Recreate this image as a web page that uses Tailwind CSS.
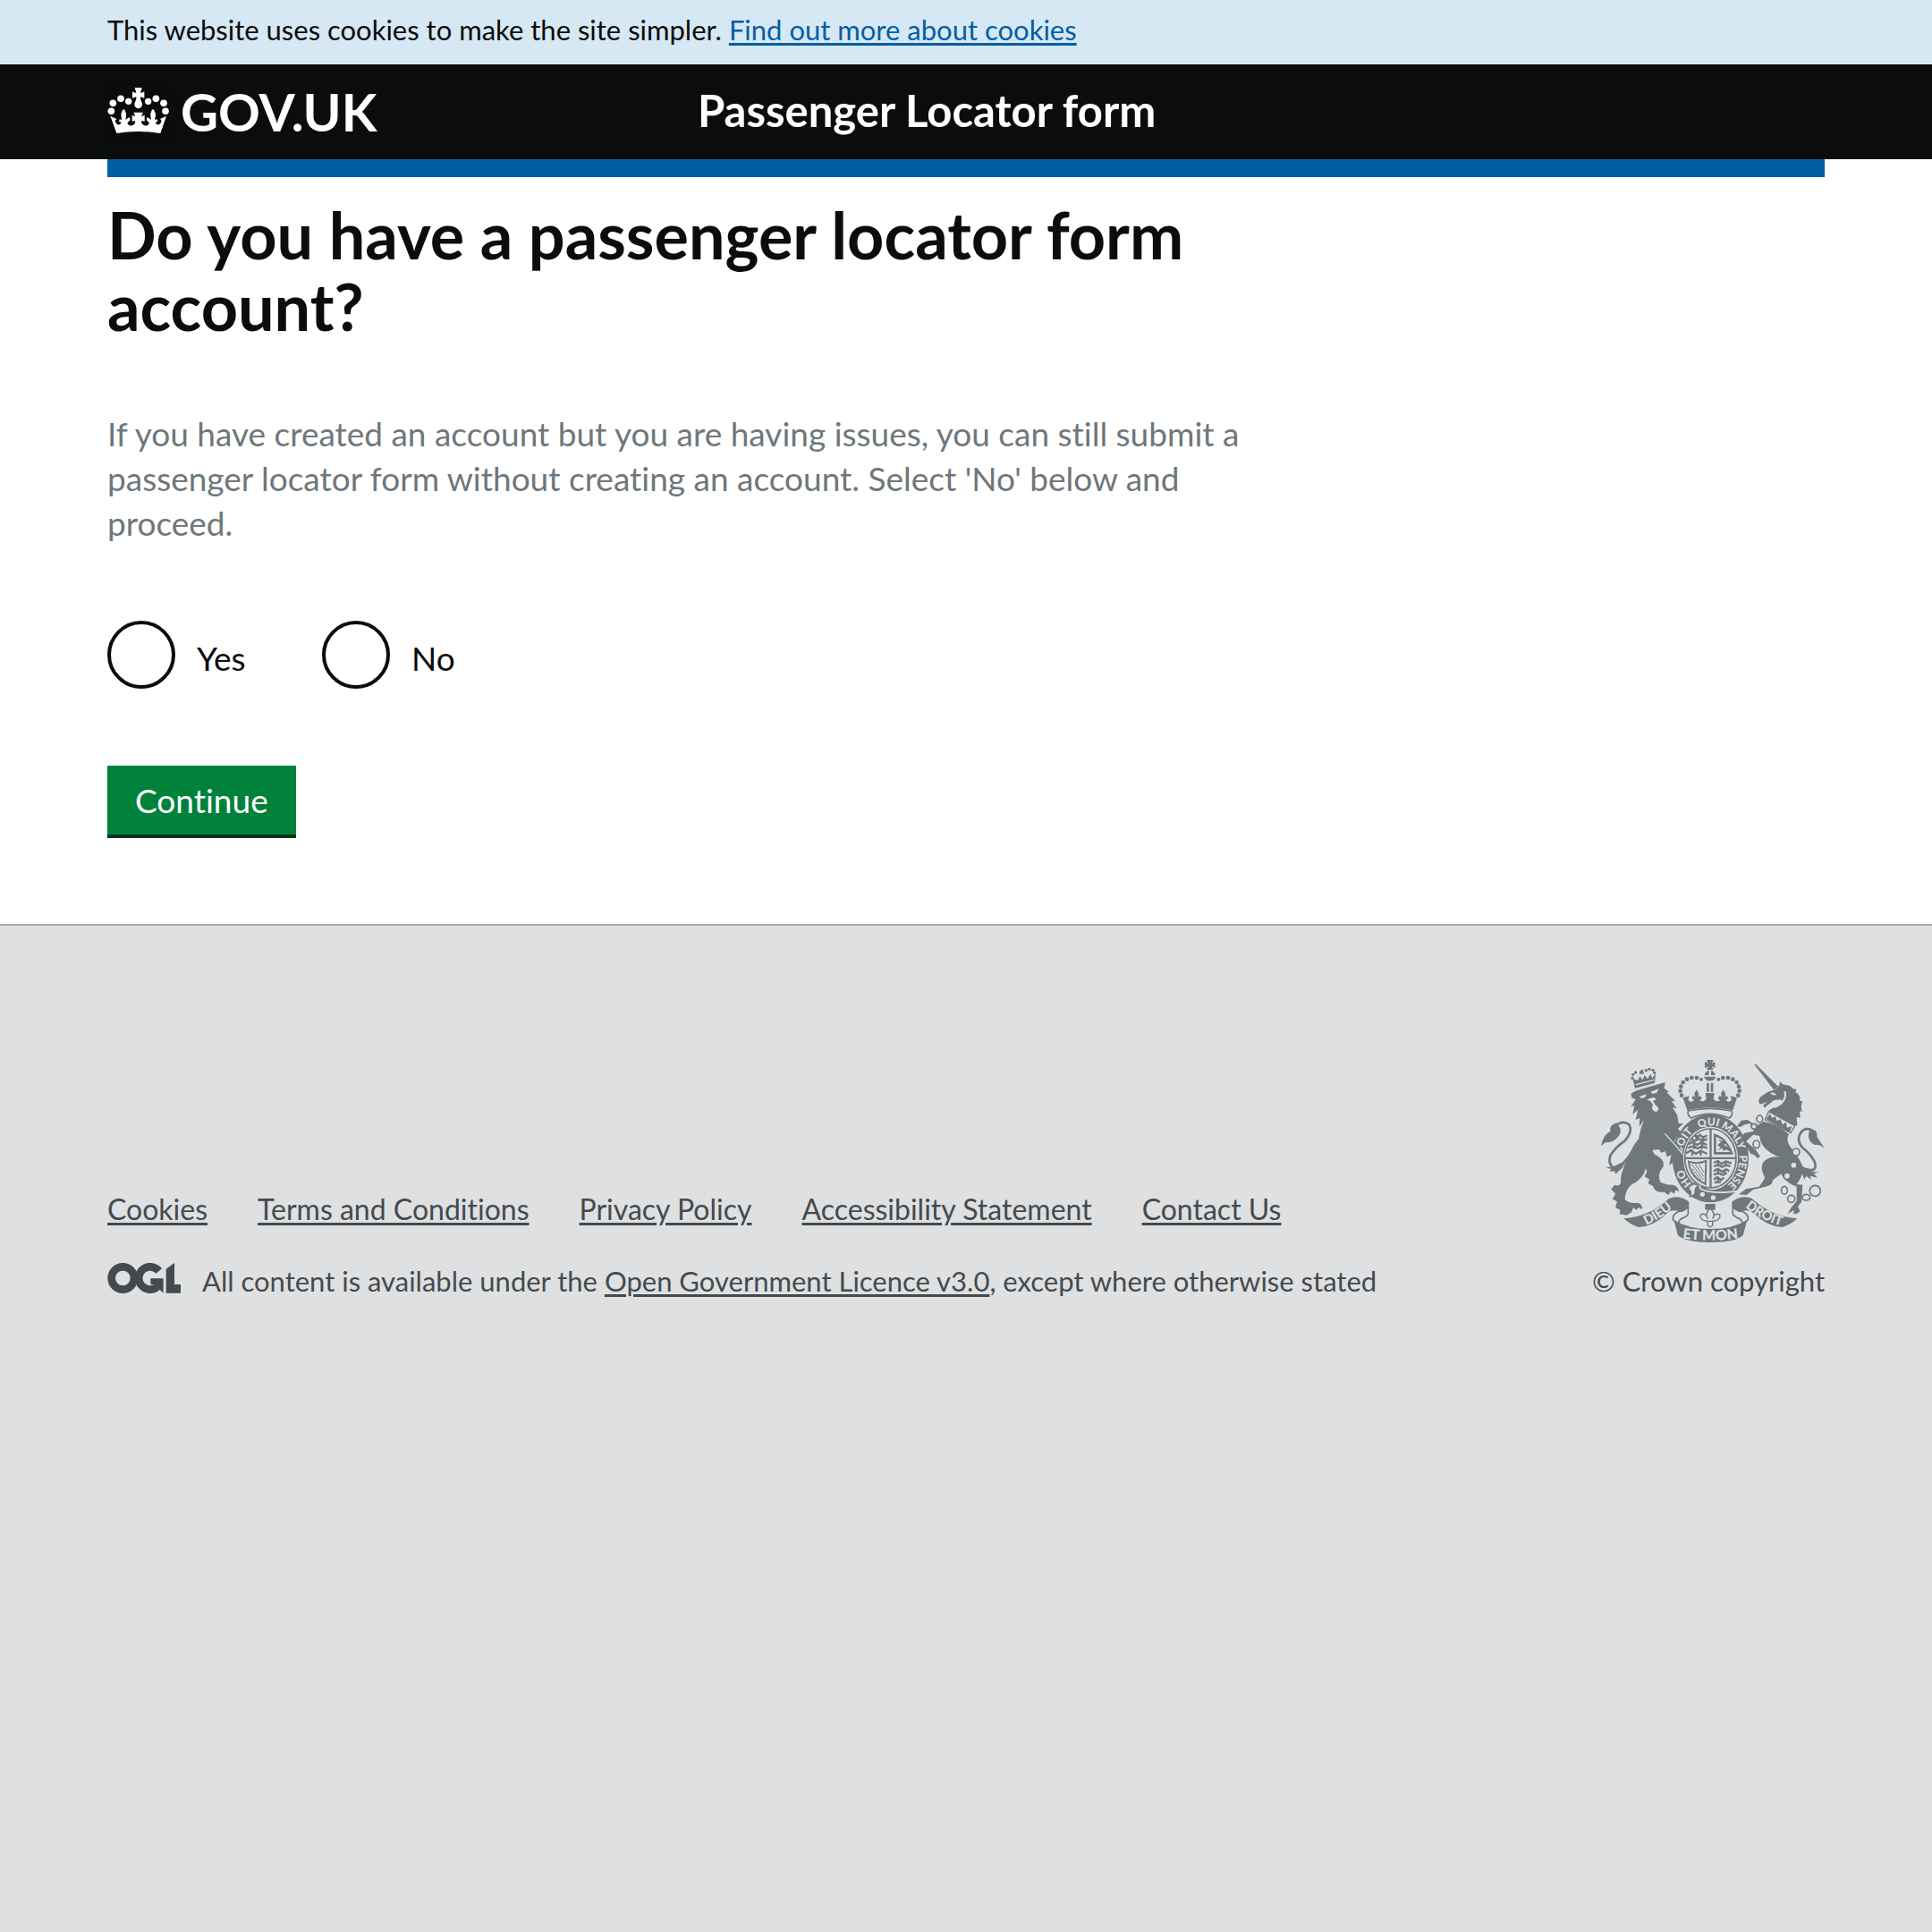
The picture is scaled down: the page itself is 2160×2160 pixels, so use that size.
<!DOCTYPE html>
<html lang="en">
<head>
<meta charset="utf-8">
<meta name="viewport" content="width=device-width, initial-scale=1">
<title>Do you have a passenger locator form account? - GOV.UK</title>
<script src="https://cdn.jsdelivr.net/npm/@tailwindcss/browser@4"></script>
</head>
<body class="flex min-h-screen flex-col bg-white font-['Lato',sans-serif] text-[#0b0c0c] [font-variant-ligatures:none]">

<div class="bg-[#d5e8f3] px-[120px] pt-[13px] pb-[19px]">
  <p class="text-[31px] leading-10">This website uses cookies to make the site simpler. <a href="#cookies" class="text-[#005ea5] underline decoration-3 underline-offset-3">Find out more about cookies</a></p>
</div>

<header class="bg-[#0b0c0c] px-[120px] text-white">
  <div class="grid grid-cols-3 items-start gap-x-[60px] py-5">
    <a href="#home" class="flex items-start gap-3 pt-1">
      <svg class="h-[62px] w-[70px] shrink-0 bg-[#0b0b0b]" viewBox="61 48 210 186" fill="#fff" aria-hidden="true">
        <circle cx="74" cy="133" r="11.500"/><circle cx="80" cy="106" r="11.500"/><circle cx="106" cy="91" r="11.500"/><circle cx="132" cy="100" r="11"/>
        <circle cx="256" cy="133" r="11.500"/><circle cx="250" cy="106" r="11.500"/><circle cx="224" cy="91" r="11.500"/><circle cx="198" cy="100" r="11"/>
        <path d="M153 54H177L172 71Q179 72 185 67V90Q178 84 171 86Q173 97 178 107Q179 121 165 124Q151 121 152 107Q157 97 159 86Q152 84 145 90V67Q151 72 158 71Z"/>
        <path d="M71 149L92 159Q84 165 91 174Q98 182 106 175Q110 168 100 168L102 160L110 162Q102 138 116 125Q129 138 122 162L134 153Q142 163 132 168Q126 172 131 178Q139 185 150 178Q158 171 152 164L144 168V146L155 151L149 137H181L175 151L186 146V168L178 164Q172 171 180 178Q191 185 199 178Q204 172 198 168Q188 163 196 153L208 162Q201 138 214 125Q228 138 220 162L228 160L230 168Q220 168 224 175Q232 182 239 174Q246 165 238 159L259 149L239 207Q165 195 92 207Z"/>
      </svg>
      <span class="text-[58px] leading-[58px] font-bold">GOV.UK</span>
    </a>
    <a href="#service" class="col-span-2 text-[49px] leading-[62px] font-bold">Passenger Locator form</a>
  </div>
</header>

<main class="px-[120px] pb-24">
  <div class="h-5 bg-[#005ea5]"></div>
  <form class="w-2/3 pt-6">
    <fieldset aria-describedby="hint">
      <legend><h1 class="text-[72px] leading-20 font-bold">Do you have a passenger locator form account?</h1></legend>
      <p id="hint" class="mt-[78px] text-[37px] leading-[50px] text-[#6f777b]">If you have created an account but you are having issues, you can still submit a passenger locator form without creating an account. Select 'No' below and proceed.</p>
      <div class="mt-[84px] flex">
        <div class="flex w-60 items-center gap-6">
          <input type="radio" id="yes" name="account" value="yes" class="size-19 appearance-none rounded-full border-4 border-[#0b0c0c] bg-white">
          <label for="yes" class="pt-2 text-[37px] leading-[50px]">Yes</label>
        </div>
        <div class="flex w-60 items-center gap-6">
          <input type="radio" id="no" name="account" value="no" class="size-19 appearance-none rounded-full border-4 border-[#0b0c0c] bg-white">
          <label for="no" class="pt-2 text-[37px] leading-[50px]">No</label>
        </div>
      </div>
    </fieldset>
    <button type="submit" class="mt-[86px] block border-b-4 border-[#003618] bg-[#00823b] px-[31px] pt-[14px] pb-[13px] text-[37px] leading-[50px] text-white">Continue</button>
  </form>
</main>

<footer class="grow border-t-2 border-[#a1acb2] bg-[#dee0e2] px-[120px] pt-[150px] text-[31px] leading-10 text-[#454a4d]">
  <div class="flex items-end justify-between">
    <div>
      <ul class="flex gap-14 text-[32px]">
        <li><a href="#cookies" class="underline decoration-3 underline-offset-3">Cookies</a></li>
        <li><a href="#terms" class="underline decoration-3 underline-offset-3">Terms and Conditions</a></li>
        <li><a href="#privacy" class="underline decoration-3 underline-offset-3">Privacy Policy</a></li>
        <li><a href="#accessibility" class="underline decoration-3 underline-offset-3">Accessibility Statement</a></li>
        <li><a href="#contact" class="underline decoration-3 underline-offset-3">Contact Us</a></li>
      </ul>
      <div class="mt-10 flex items-start gap-6">
        <svg class="h-[34px] w-[82px] shrink-0" viewBox="60 276 246 102" fill="none" stroke="#454a4d" stroke-width="26" role="img" aria-label="Open Government Licence">
          <circle cx="112" cy="327" r="38"/>
          <path d="M233 303A38 38 0 1 0 228 356"/>
          <path d="M205 328H248V377L234 364L218 348H205Z" fill="#454a4d" stroke="none"/>
          <path d="M257 296L285 276V348H306V377H257Z" fill="#454a4d" stroke="none"/>
        </svg>
        <p>All content is available under the <a href="#ogl" class="underline decoration-3 underline-offset-3">Open Government Licence v3.0</a>, except where otherwise stated</p>
      </div>
    </div>
    <a href="#copyright" class="flex flex-col items-end gap-[23px]">
      <svg class="h-[204px] w-[250px]" viewBox="60 45 750 612" fill="#6f777b" aria-hidden="true">
        <defs>
          <path id="garter" d="M427 485A97 110 0 0 1 427 265A97 110 0 0 1 427 485"/>
          <path id="ribbonLeft" d="M196 604Q250 587 312 533"/>
          <path id="ribbonRight" d="M536 531Q590 582 674 604"/>
          <path id="ribbonMid" d="M326 642Q427 658 528 642"/>
        </defs>

        <!-- imperial crown -->
        <path d="M414 45H437L431 57L442 51V73L431 66L437 78H414L420 66L408 73V51L420 57Z"/>
        <path d="M407 96Q410 82 422 80V96ZM429 80Q440 82 443 96H429ZM405 101H445Q440 115 425 115Q410 115 405 101Z"/>
        <path d="M414 122H422V152H414ZM428 122H436V152H428Z"/>
        <g>
          <circle cx="396" cy="110" r="6"/><circle cx="381" cy="105" r="7"/><circle cx="364" cy="105" r="7"/><circle cx="348" cy="110" r="7"/><circle cx="335" cy="120" r="7"/><circle cx="328" cy="134" r="7"/><circle cx="326" cy="149" r="7"/><circle cx="330" cy="164" r="7"/>
          <circle cx="454" cy="110" r="6"/><circle cx="469" cy="105" r="7"/><circle cx="486" cy="105" r="7"/><circle cx="502" cy="110" r="7"/><circle cx="515" cy="120" r="7"/><circle cx="522" cy="134" r="7"/><circle cx="524" cy="149" r="7"/><circle cx="520" cy="164" r="7"/>
        </g>
        <path d="M334 172L356 166L352 180L362 186L372 180L364 174L370 164L376 170L373 158L380 145L388 158L385 170L392 164L398 174L390 182L404 184L413 176L410 156H440L437 176L446 184L460 182L452 174L458 164L465 170L462 158L470 145L478 158L475 170L481 164L487 174L478 180L488 186L498 180L494 166L516 172L502 214Q425 196 349 214Z"/>
        <path d="M352 216Q425 200 498 216Q504 228 490 240Q425 212 362 240Q348 230 352 216Z" fill="#dee0e2" stroke="#6f777b" stroke-width="5"/>

        <!-- garter and shield -->
        <ellipse cx="427" cy="375" rx="128" ry="148"/>
        <ellipse cx="427" cy="375" rx="92" ry="106" fill="#dee0e2"/>
        <ellipse cx="427" cy="375" rx="86" ry="99" fill="none" stroke="#6f777b" stroke-width="5"/>
        <path d="M424 276H431V475H424ZM341 371H513V378H341Z"/>
        <path d="M438 292Q480 300 504 362H438ZM446 302V354H492Q480 316 446 302Z" fill-rule="evenodd"/>
        <path d="M452 350L460 338L450 330L462 322L452 312L468 318L474 310L480 322L472 330L486 338L494 352L480 346L470 350L466 340Z"/>
        <g fill="none" stroke="#6f777b" stroke-width="7" stroke-linejoin="round">
          <path d="M372 298L384 304L392 296L402 306L416 298M362 310L374 316L388 309L400 317L416 310M354 328L368 320L382 330L396 322L416 330M352 340L370 334L384 342L400 334L416 341M346 358L362 348L378 360L394 350L416 360M380 296V318M402 300V318M372 324V344M398 324V344M366 350V366M394 350V366"/>
          <path d="M438 390L452 384L464 394L478 385L498 392M438 402L452 397L466 404L480 397L494 402M438 418L452 410L466 420L480 412L490 418M438 430L454 424L468 431L482 424M438 446L450 438L462 448L472 440M440 456L462 454M452 384V402M478 386V402M452 412V430M474 412V428M452 440V456"/>
        </g>
        <path d="M354 386Q384 396 412 384L410 462Q394 452 384 446Q356 420 354 386Z" fill="none" stroke="#6f777b" stroke-width="6"/>
        <path d="M364 394L402 446M376 396L404 436M388 396L406 424M366 410L396 450" stroke="#6f777b" stroke-width="3"/>
        <path d="M346 470Q372 444 404 472Q440 492 510 474L480 505Q440 530 395 518Z"/>
        <path d="M352 478Q362 455 382 464Q396 468 392 476Q430 498 528 484" fill="none" stroke="#dee0e2" stroke-width="5"/>
        <path d="M352 476Q366 452 386 466Q374 476 376 490Q372 504 358 502Q366 488 352 476Z" fill="#dee0e2" stroke="#6f777b" stroke-width="5"/>
        <circle cx="400" cy="496" r="8" fill="#dee0e2"/><circle cx="436" cy="507" r="8" fill="#dee0e2"/>
        <g fill="#dee0e2" font-family="Lato, sans-serif" font-size="36" font-weight="900" text-anchor="middle">
          <text><textPath href="#garter" startOffset="15%">HO</textPath></text>
          <text><textPath href="#garter" startOffset="34%">SOIT</textPath></text>
          <text><textPath href="#garter" startOffset="49%">QUI</textPath></text>
          <text><textPath href="#garter" startOffset="63%">MALY</textPath></text>
          <text><textPath href="#garter" startOffset="82%">PENSE</textPath></text>
        </g>

        <!-- lion -->
        <path d="M166 108L174 140L240 122L243 90L232 106L226 92L216 108L206 96L200 112L190 100L184 114Z"/>
        <path d="M176 128L238 112" stroke="#dee0e2" stroke-width="4"/>
        <path d="M186 88L200 76L204 94ZM190 80H202V92H190Z"/>
        <g><circle cx="165" cy="106" r="5"/><circle cx="167" cy="94" r="5"/><circle cx="176" cy="87" r="5"/><circle cx="211" cy="80" r="5"/><circle cx="222" cy="76" r="5"/><circle cx="234" cy="79" r="5"/><circle cx="239" cy="88" r="5"/></g>
        <path d="M160 158L178 148L262 124L275 120L272 140L288 152L280 154L294 168L310 184L296 182L314 208L300 204L316 232L320 258L336 258L318 276L326 286L306 318L324 338L335 368L338 398L326 394L316 405L302 398L304 388L288 398L292 380L296 364L280 370L276 352L262 356L254 345L232 348L240 362Q276 378 268 404Q246 430 260 456L286 464Q316 460 322 486L310 482L305 494L294 486L286 498L272 488Q240 492 234 468L218 460L222 446L206 436L214 420L208 404L213 384Q212 440 164 462Q140 480 140 514Q154 528 184 524Q200 530 198 546L186 540L178 548L168 540L162 556L146 566L122 562L124 548L108 540L114 520L98 512L108 494L94 478L106 464Q130 474 126 442Q132 406 152 370Q164 336 186 310Q192 276 204 246L188 270L190 240L176 246L184 212L166 228L172 198L160 202L176 178L163 172Z"/>
        <path d="M188 168L212 160L208 170L196 174ZM226 152L254 142L246 156L232 158ZM214 178L236 170L246 178L234 182L242 196Q256 204 252 214Q244 224 234 214Q228 206 234 196L226 184Z" fill="#dee0e2"/>
        <path d="M274 292L312 334L334 362" fill="none" stroke="#dee0e2" stroke-width="4"/>
        <path d="M166 350Q126 412 100 406Q82 390 92 364Q108 338 140 316Q168 284 154 262Q140 250 120 258" fill="none" stroke="#6f777b" stroke-width="8"/>
        <path d="M130 256Q96 252 90 276L92 284Q66 296 60 334Q76 318 84 322Q110 318 124 292Q128 274 118 264Z"/>
        <path d="M146 382L130 408L108 428L106 418L88 420L94 412L74 404L98 404Z"/>

        <!-- unicorn -->
        <path d="M574 60L580 60L654 134L640 146Z"/>
        <path d="M588 180L596 168L620 152L646 144L658 130L660 118L672 128Q696 128 704 142L716 144L712 152Q732 166 726 182L736 184Q728 198 734 220L726 216L728 240L716 236L718 264L706 266L622 216Q634 204 660 198Q672 190 664 178L640 180L622 194L608 206L604 196L618 186L592 194Z"/>
        <path d="M676 150Q686 184 642 204" fill="none" stroke="#dee0e2" stroke-width="6"/>
        <path d="M628 158Q638 150 648 162Q638 166 628 158Z" fill="#dee0e2"/>
        <path d="M622 218L610 246L696 290L710 266Z" fill="#dee0e2" stroke="#6f777b" stroke-width="4"/>
        <path d="M614 244L626 226L634 240L644 234L650 250L662 244L668 262L680 254L684 272L700 268L692 288Z"/>
        <path d="M606 252Q650 262 690 294Q678 316 696 338Q724 370 736 402Q740 430 716 462L736 464L732 522L720 538L728 552L716 562L704 560L708 548L686 562L698 540L716 518V470Q676 458 660 420Q630 406 634 448Q640 464 612 470L570 480L548 498L522 496L546 478L590 470L606 448L610 440Q584 394 620 376Q640 366 660 372Q594 346 592 300L570 296L556 310L546 318L580 348L594 370L584 374L574 364L562 360L528 304L542 290L584 282L572 284L560 258L542 262L528 270L516 268L530 248L552 246L580 266Z"/>
        <path d="M610 436L640 380L664 372L668 424L634 450L618 468L604 456Z"/>
        <g fill="none" stroke="#6f777b" stroke-width="5">
          <circle cx="778" cy="484" r="18"/><ellipse cx="748" cy="506" rx="13" ry="10"/><circle cx="698" cy="511" r="12"/><ellipse cx="675" cy="482" rx="10" ry="13"/>
          <ellipse cx="592" cy="243" rx="10" ry="12"/>
          <g fill="#dee0e2"><circle cx="714" cy="354" r="12"/><ellipse cx="581" cy="328" rx="11" ry="13"/><circle cx="573" cy="268" r="9"/><circle cx="706" cy="398" r="11"/><circle cx="684" cy="434" r="11"/></g>
        </g>
        <path d="M732 406Q790 430 776 386Q760 356 736 340Q712 312 732 286Q744 270 766 280" fill="none" stroke="#6f777b" stroke-width="8"/>
        <path d="M760 276Q788 278 784 302L810 342Q792 326 776 330Q754 318 756 296Z"/>
        <path d="M720 394L742 446L748 434L764 446L762 434L786 440L774 426L792 420Q756 424 736 402Z"/>

        <!-- motto ribbon -->
        <path d="M136 577Q220 572 288 510Q320 496 354 520Q360 546 330 556Q300 542 280 560Q240 602 186 606Q158 598 136 577Z"/>
        <path d="M718 577Q634 572 566 510Q534 496 500 520Q494 546 524 556Q554 542 574 560Q614 602 668 606Q696 598 718 577Z"/>
        <path d="M332 549Q296 560 302 582L318 596M352 524V552Q356 566 338 574Q318 580 320 596M522 549Q558 560 552 582L536 596M502 524V552Q498 566 516 574Q536 580 534 596" fill="none" stroke="#6f777b" stroke-width="5"/>
        <path d="M304 582Q352 612 427 612Q502 612 550 582L536 634Q510 657 427 657Q344 657 318 634Z"/>
        <g fill="#dee0e2" font-family="Lato, sans-serif" font-size="44" font-weight="900" text-anchor="middle">
          <text><textPath href="#ribbonLeft" startOffset="50%">DIEU</textPath></text>
          <text><textPath href="#ribbonRight" startOffset="50%">DROIT</textPath></text>
          <text font-size="48"><textPath href="#ribbonMid" startOffset="50%">ET MON</textPath></text>
        </g>
        <path d="M409 528H443V548H409Z"/>
        <path d="M426 542Q446 562 434 578Q440 556 458 564Q462 578 446 584L434 586V600L426 606L418 600V586L406 584Q390 578 394 564Q412 556 418 578Q406 562 426 542ZM412 586H440" fill="#dee0e2" stroke="#6f777b" stroke-width="4"/>
      </svg>
      <span>© Crown copyright</span>
    </a>
  </div>
</footer>
</body>
</html>
